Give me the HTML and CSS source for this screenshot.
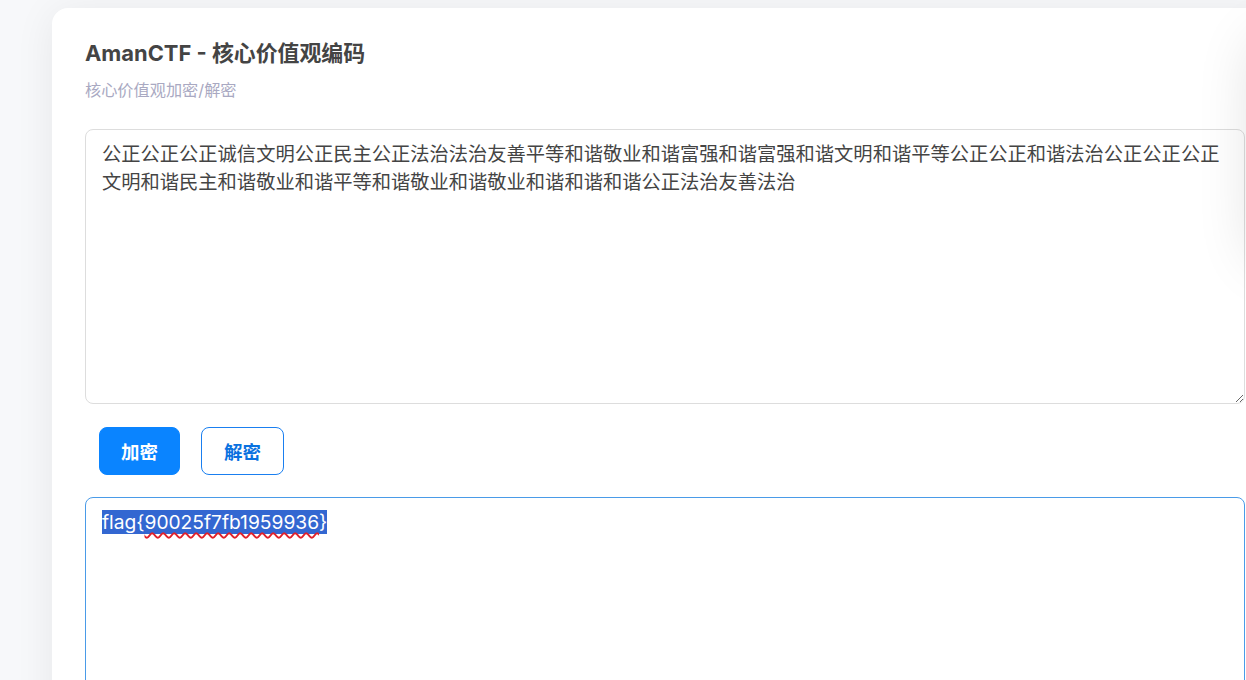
FILE: index.html
```html
<!DOCTYPE html>
<html lang="zh-CN">
<head>
    <meta charset="UTF-8">
    <meta name="viewport" content="width=device-width, initial-scale=1.0">
    <title>AmanCTF - 核心价值观编码</title>
    <link rel="stylesheet" href="styles.css">
</head>
<body>

<div class="page">
    <div class="container">
        <h2>AmanCTF - 核心价值观编码</h2>
        <p class="subtitle">核心价值观加密/解密</p>

        <textarea class="input-box" id="input" spellcheck="false">公正公正公正诚信文明公正民主公正法治法治友善平等和谐敬业和谐富强和谐富强和谐文明和谐平等公正公正和谐法治公正公正公正文明和谐民主和谐敬业和谐平等和谐敬业和谐敬业和谐和谐和谐公正法治友善法治</textarea>

        <div class="actions">
            <button class="btn btn-primary" id="encode-btn">加密</button>
            <button class="btn btn-outline" id="decode-btn">解密</button>
        </div>

        <div class="output-box" id="output"><span class="selected">flag{<span class="misspelled">90025f7fb1959936</span>}</span></div>
    </div>
</div>

<div class="side-panel"></div>

</body>
</html>
```

FILE: styles.css
```css
body {
    font-family: Inter, "Noto Sans CJK SC", sans-serif;
    margin: 0;
    padding: 0;
    background-color: #f7f8fa;
    overflow: hidden;
    height: 100vh;
}
.page {
    padding: 8px 0 0 52px;
}
.container {
    background-color: white;
    width: 1226px;
    height: 720px;
    padding: 30px 33px;
    box-sizing: border-box;
    border-radius: 16px;
    box-shadow: 0 4px 40px rgba(0, 0, 0, 0.07);
}
h2 {
    margin: 0;
    font-size: 21.9px;
    line-height: 30px;
    font-weight: 700;
    color: #444;
}
.subtitle {
    margin: 10px 0 0;
    font-size: 16.2px;
    line-height: 24px;
    color: #a9a9c2;
}
.input-box {
    display: block;
    margin-top: 27px;
    width: 1160px;
    height: 275px;
    box-sizing: border-box;
    padding: 10px 16px;
    font-family: Inter, "Noto Sans CJK SC", sans-serif;
    font-size: 19.28px;
    line-height: 28px;
    color: #444;
    border: 1px solid #ddd;
    border-radius: 8px;
    outline: none;
}
.actions {
    display: flex;
    gap: 21px;
    margin-top: 23px;
    padding-left: 14px;
}
.btn {
    height: 48px;
    padding: 0 21px;
    font-family: Inter, "Noto Sans CJK SC", sans-serif;
    font-size: 18.5px;
    font-weight: 700;
    border-radius: 8px;
    cursor: pointer;
}
.btn-primary {
    background-color: #0a84ff;
    color: white;
    border: 1px solid #0a84ff;
}
.btn-outline {
    padding: 0 22px;
    background-color: white;
    color: #0a72e0;
    border: 1px solid #1a7ff0;
}
.output-box {
    margin-top: 22px;
    width: 1160px;
    height: 200px;
    box-sizing: border-box;
    padding: 10px 16px;
    font-size: 19.2px;
    line-height: 28px;
    color: #444;
    border: 1px solid #4a9be8;
    border-radius: 8px;
}
.selected {
    background-color: #3367d1;
    color: white;
}
.misspelled {
    text-decoration: underline wavy #e0202a;
    text-decoration-thickness: 1.5px;
    text-underline-offset: 3px;
}
.side-panel {
    position: fixed;
    left: 1256px;
    top: 40px;
    width: 300px;
    height: 220px;
    border-radius: 16px;
    background-color: white;
    box-shadow: 0 0 60px rgba(0, 0, 0, 0.14);
}
```
